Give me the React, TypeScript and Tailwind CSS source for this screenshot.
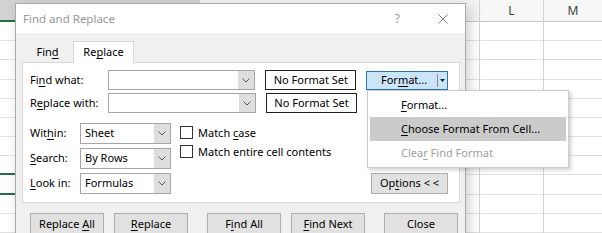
import React from 'react';

const font = "font-['Noto_Sans','Segoe_UI',sans-serif]";

function U({ children }: { children: React.ReactNode }) {
  return <span className="underline decoration-1 underline-offset-[2px]">{children}</span>;
}

function Chevron() {
  return (
    <svg width="8" height="5" viewBox="0 0 8 5" className="text-[#555]">
      <path d="M0.5 0.5 L4 4 L7.5 0.5" fill="none" stroke="currentColor" strokeWidth="1" />
    </svg>
  );
}

function Combo({ width, height, text }: { width: string; height: string; text?: string }) {
  return (
    <div className={`${width} ${height} flex border border-[#a6a6a6] bg-white`}>
      <div className="flex-1 flex items-center pl-[4px] text-[11px] text-black">{text}</div>
      <div className="w-[16px] flex items-center justify-center bg-[#dedede]">
        <Chevron />
      </div>
    </div>
  );
}

function Button({ children, className = '' }: { children: React.ReactNode; className?: string }) {
  return (
    <div
      className={`w-[74px] h-[23px] flex items-center justify-center border border-[#adadad] bg-[#e1e1e1] text-[11px] text-black ${className}`}
    >
      <span>{children}</span>
    </div>
  );
}

function Checkbox({ label }: { label: React.ReactNode }) {
  return (
    <div className="flex items-center gap-[5px] h-[13px]">
      <div className="w-[13px] h-[13px] border border-[#333] bg-white" />
      <span className="text-[11px] text-black leading-none">{label}</span>
    </div>
  );
}

function MenuItem({ children, className = '' }: { children: React.ReactNode; className?: string }) {
  return (
    <div className={`h-[24px] flex items-center pl-[31px] ${className}`}>
      <span>{children}</span>
    </div>
  );
}

function Spreadsheet() {
  const rows = Array.from({ length: 11 });
  return (
    <div className="absolute inset-0 flex">
      {/* selected column (left strip) */}
      <div className="w-[200px] flex flex-col">
        <div className="h-[23px] bg-[#d2d2d2] border-b-2 border-[#217346]" />
        {rows.map((_, i) => (
          <div
            key={i}
            className={`h-[20px] ${
              i === 7 || i === 8 ? 'border-b-2 border-[#217346]' : 'border-b border-[#e1e1e1]'
            }`}
          />
        ))}
      </div>
      <div className="w-[280px] flex flex-col border-r border-[#d4d4d4]">
        <div className="h-[23px] bg-[#f3f3f3] border-b border-[#c6c6c6]" />
        {rows.map((_, i) => (
          <div key={i} className="h-[20px] border-b border-[#e1e1e1]" />
        ))}
      </div>
      <div className="w-[64px] flex flex-col border-r border-[#d4d4d4]">
        <div className="h-[23px] bg-[#f7f7f7] border-b border-[#c6c6c6] flex items-center justify-center text-[12px] text-[#444]">
          L
        </div>
        {rows.map((_, i) => (
          <div key={i} className="h-[20px] border-b border-[#e1e1e1]" />
        ))}
      </div>
      <div className="flex-1 flex flex-col">
        <div className="h-[23px] bg-[#f7f7f7] border-b border-[#c6c6c6] flex items-center justify-center text-[12px] text-[#444]">
          M
        </div>
        {rows.map((_, i) => (
          <div key={i} className="h-[20px] border-b border-[#e1e1e1]" />
        ))}
      </div>
    </div>
  );
}

export default function App() {
  return (
    <div className={`relative w-[602px] h-[233px] overflow-hidden bg-white ${font}`}>
      <Spreadsheet />

      {/* dialog window */}
      <div className="absolute left-[15px] top-[3px] w-[451px] h-[240px] border border-[#a9a9a9] bg-[#f0f0f0] shadow-[4px_4px_12px_rgba(0,0,0,0.18)] flex flex-col">
        <div className="h-[29px] bg-white flex items-center pl-[7px] pr-[17px]">
          <span className="text-[11.5px] text-[#999]">Find and Replace</span>
          <span className="ml-auto text-[12px] text-[#999] mr-[38px]">?</span>
          <svg width="10" height="10" viewBox="0 0 10 10" className="text-[#888]">
            <path d="M0.5 0.5 L9.5 9.5 M9.5 0.5 L0.5 9.5" stroke="currentColor" strokeWidth="1" />
          </svg>
        </div>

        {/* tabs */}
        <div className="mt-[7px] ml-[6px] flex items-end h-[22px]">
          <div className="h-[19px] w-[51px] flex items-center justify-center text-[11px] text-black">
            <span>
              Fin<U>d</U>
            </span>
          </div>
          <div className="h-[22px] w-[61px] bg-white border border-b-0 border-[#d9d9d9] flex items-center justify-center text-[11px] text-black -mb-px relative z-10">
            <span>
              Re<U>p</U>lace
            </span>
          </div>
        </div>

        {/* tab panel */}
        <div className="ml-[6px] w-[438px] h-[141px] bg-white border border-[#d9d9d9] pt-[7px] pl-[7px] pr-[11px] flex flex-col">
          <div className="flex items-center">
            <span className="w-[78px] text-[11px] text-black">
              Fi<U>n</U>d what:
            </span>
            <Combo width="w-[148px]" height="h-[20px]" />
            <div className="ml-[10px] w-[91px] h-[20px] border border-[#222] flex items-center justify-center text-[11px] text-black">
              No Format Set
            </div>
            <div className="ml-[10px] w-[82px] h-[19px] border border-[#2e73b5] bg-[#cce4f7] flex text-[11px] text-black">
              <div className="flex-1 flex items-center justify-center pl-[4px]">
                <span>
                  For<U>m</U>at...
                </span>
              </div>
              <div className="w-[10px] my-[2px] border-l border-[#8a8a8a] flex items-center justify-center">
                <svg width="5" height="3" viewBox="0 0 5 3">
                  <path d="M0 0 L5 0 L2.5 3 Z" fill="#222" />
                </svg>
              </div>
            </div>
          </div>

          <div className="flex items-center mt-[3px]">
            <span className="w-[78px] text-[11px] text-black">
              R<U>e</U>place with:
            </span>
            <Combo width="w-[148px]" height="h-[20px]" />
            <div className="ml-[10px] w-[91px] h-[20px] border border-[#222] flex items-center justify-center text-[11px] text-black">
              No Format Set
            </div>
          </div>

          <div className="flex mt-[10px]">
            <div className="flex flex-col gap-[4px]">
              <div className="flex items-center">
                <span className="w-[50px] text-[11px] text-black">
                  Wit<U>h</U>in:
                </span>
                <Combo width="w-[91px]" height="h-[21px]" text="Sheet" />
              </div>
              <div className="flex items-center">
                <span className="w-[50px] text-[11px] text-black">
                  <U>S</U>earch:
                </span>
                <Combo width="w-[91px]" height="h-[21px]" text="By Rows" />
              </div>
              <div className="flex items-center">
                <span className="w-[50px] text-[11px] text-black">
                  <U>L</U>ook in:
                </span>
                <Combo width="w-[91px]" height="h-[21px]" text="Formulas" />
              </div>
            </div>

            <div className="ml-[9px] pt-[3px] flex flex-col gap-[6px]">
              <Checkbox
                label={
                  <>
                    Match <U>c</U>ase
                  </>
                }
              />
              <Checkbox label="Match entire cell contents" />
            </div>

            <div className="ml-auto self-end">
              <div className="w-[77px] h-[21px] flex items-center justify-center border border-[#adadad] bg-[#e1e1e1] text-[11px] text-black">
                <span>
                  Op<U>t</U>ions &lt; &lt;
                </span>
              </div>
            </div>
          </div>
        </div>

        {/* bottom buttons */}
        <div className="mt-[10px] ml-[14px] flex">
          <Button>
            Replace <U>A</U>ll
          </Button>
          <Button className="ml-[10px]">
            <U>R</U>eplace
          </Button>
          <Button className="ml-[19px]">
            F<U>i</U>nd All
          </Button>
          <Button className="ml-[10px]">
            <U>F</U>ind Next
          </Button>
          <Button className="ml-[19px]">Close</Button>
        </div>
      </div>

      {/* Format dropdown menu */}
      <div className="absolute left-[367px] top-[90px] w-[202px] bg-white border border-[#cccccc] shadow-[2px_2px_4px_rgba(0,0,0,0.2)] py-[2px] px-[2px] flex flex-col text-[11px]">
        <MenuItem className="text-black">
          <U>F</U>ormat...
        </MenuItem>
        <MenuItem className="text-black bg-[#cbcbcb]">
          <U>C</U>hoose Format From Cell...
        </MenuItem>
        <MenuItem className="text-[#a0a0a0]">
          Clea<U>r</U> Find Format
        </MenuItem>
      </div>
    </div>
  );
}
